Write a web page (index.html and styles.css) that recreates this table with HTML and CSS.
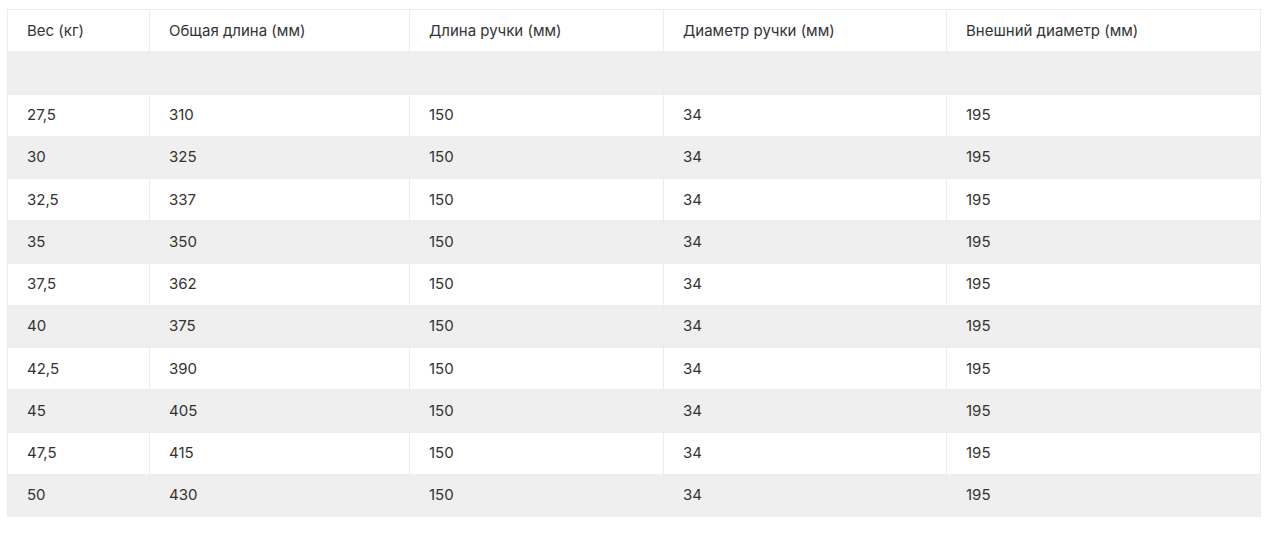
FILE: index.html
```html
<!DOCTYPE html>
<html lang="ru">
<head>
<meta charset="utf-8">
<title>Таблица размеров</title>
<link rel="stylesheet" href="styles.css">
</head>
<body>
<div class="wrap">
<table class="specs">
<colgroup>
<col class="c1"><col class="c2"><col class="c3"><col class="c4"><col class="c5">
</colgroup>
<thead>
<tr><th>Вес (кг)</th><th>Общая длина (мм)</th><th>Длина ручки (мм)</th><th>Диаметр ручки (мм)</th><th>Внешний диаметр (мм)</th></tr>
</thead>
<tbody>
<tr class="alt"><td></td><td></td><td></td><td></td><td></td></tr>
<tr><td>27,5</td><td>310</td><td>150</td><td>34</td><td>195</td></tr>
<tr class="alt"><td>30</td><td>325</td><td>150</td><td>34</td><td>195</td></tr>
<tr><td>32,5</td><td>337</td><td>150</td><td>34</td><td>195</td></tr>
<tr class="alt"><td>35</td><td>350</td><td>150</td><td>34</td><td>195</td></tr>
<tr><td>37,5</td><td>362</td><td>150</td><td>34</td><td>195</td></tr>
<tr class="alt"><td>40</td><td>375</td><td>150</td><td>34</td><td>195</td></tr>
<tr><td>42,5</td><td>390</td><td>150</td><td>34</td><td>195</td></tr>
<tr class="alt"><td>45</td><td>405</td><td>150</td><td>34</td><td>195</td></tr>
<tr><td>47,5</td><td>415</td><td>150</td><td>34</td><td>195</td></tr>
<tr class="alt"><td>50</td><td>430</td><td>150</td><td>34</td><td>195</td></tr>
</tbody>
</table>
</div>
</body>
</html>
```
FILE: styles.css
```css
html, body {
  margin: 0;
  padding: 0;
  background: #ffffff;
}
.wrap {
  padding: 9px 0 0 7px;
}
.specs {
  border-collapse: collapse;
  table-layout: fixed;
  width: 1253px;
  font-family: Inter, "Noto Sans", sans-serif;
  font-size: 15px;
  color: #333333;
}
.c1 { width: 142px; }
.c2 { width: 260px; }
.c3 { width: 254px; }
.c4 { width: 283px; }
.c5 { width: 314px; }
.specs th,
.specs td {
  border: 1px solid #ededed;
  padding: 10.5px 19px 11.5px;
  line-height: 19.25px;
  height: 19.25px;
  text-align: left;
  font-weight: 400;
  vertical-align: middle;
}
.specs .alt td {
  background: #efefef;
}
```
